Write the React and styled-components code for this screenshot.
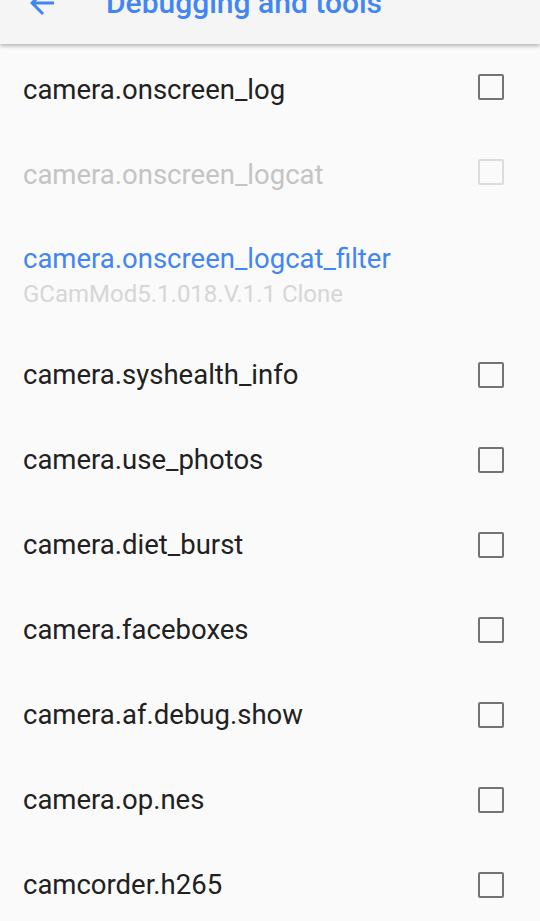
import React from 'react';
import styled, { createGlobalStyle } from 'styled-components';

const GlobalStyle = createGlobalStyle`
  html, body {
    margin: 0;
    padding: 0;
    overflow: hidden;
    background: #fafafa;
    font-family: Roboto, "Noto Sans", "Liberation Sans", sans-serif;
  }
`

const Page = styled.div`
  width: 540px;
  background: #fafafa;
`

// toolbar is scrolled so only its lower part shows
const Toolbar = styled.header`
  position: relative;
  z-index: 1;
  height: 44px;
  box-sizing: border-box;
  padding: 0 0 38px 24px;
  display: flex;
  align-items: center;
  gap: 46px;
  overflow: hidden;
  background: #f5f5f5;
  box-shadow: 0 2px 4px rgba(0, 0, 0, 0.28);
`

const BackIcon = styled.svg`
  width: 36px;
  height: 36px;
  flex-shrink: 0;
  fill: #4285f4;
`

const Title = styled.h1`
  margin: 0;
  font-size: 30px;
  line-height: 1;
  font-weight: 500;
  color: #4285f4;
  white-space: nowrap;
`

const List = styled.div`
  display: flex;
  flex-direction: column;
`

const Row = styled.div`
  height: ${p => (p.tall ? 118 : 85)}px;
  box-sizing: border-box;
  padding: 0 36px 0 23px;
  display: flex;
  align-items: center;
`

const TextBlock = styled.div`
  flex: 1;
  padding-top: ${p => p.drop || 0}px;
  display: flex;
  flex-direction: column;
`

const PrefTitle = styled.div`
  font-size: 27.5px;
  line-height: 30px;
  color: ${p => (p.disabled ? '#c4c4c4' : p.accent ? '#4285f4' : '#212121')};
`

const Summary = styled.div`
  margin-top: 6px;
  font-size: 24px;
  line-height: 28px;
  color: #d6d6d6;
`

const Check = styled.div`
  width: 26px;
  height: 26px;
  box-sizing: border-box;
  border: 2.5px solid ${p => (p.disabled ? '#dcdcdc' : '#737373')};
  border-radius: 2px;
  flex-shrink: 0;
`

const prefs = [
  { key: 'camera.onscreen_log', check: true, drop: 6 },
  { key: 'camera.onscreen_logcat', check: true, disabled: true, drop: 6 },
  { key: 'camera.onscreen_logcat_filter', summary: 'GCamMod5.1.018.V.1.1 Clone', accent: true, drop: 5 },
  { key: 'camera.syshealth_info', check: true },
  { key: 'camera.use_photos', check: true },
  { key: 'camera.diet_burst', check: true },
  { key: 'camera.faceboxes', check: true },
  { key: 'camera.af.debug.show', check: true },
  { key: 'camera.op.nes', check: true },
  { key: 'camcorder.h265', check: true },
]

function App() {
  return (
    <Page>
      <GlobalStyle />
      <Toolbar>
        <BackIcon viewBox="0 0 24 24">
          <path d="M20 11H7.83l5.59-5.59L12 4l-8 8 8 8 1.41-1.41L7.83 13H20v-2z" />
        </BackIcon>
        <Title>Debugging and tools</Title>
      </Toolbar>
      <List>
        {prefs.map(p => (
          <Row key={p.key} tall={p.summary ? 1 : 0}>
            <TextBlock drop={p.drop}>
              <PrefTitle disabled={p.disabled} accent={p.accent}>{p.key}</PrefTitle>
              {p.summary && <Summary>{p.summary}</Summary>}
            </TextBlock>
            {p.check && <Check disabled={p.disabled} />}
          </Row>
        ))}
      </List>
    </Page>
  )
}

export default App;
